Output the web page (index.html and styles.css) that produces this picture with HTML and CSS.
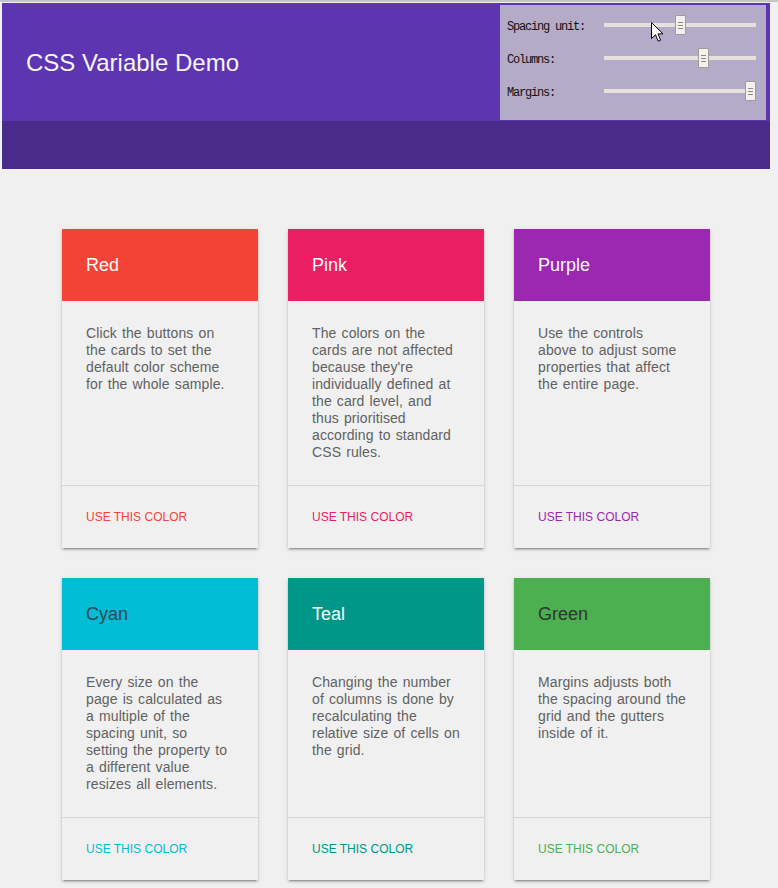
FILE: index.html
```html
<!DOCTYPE html>
<html lang="en">
<head>
<meta charset="utf-8">
<title>CSS Variable Demo</title>
<link rel="stylesheet" href="styles.css">
</head>
<body>
<div class="topline"></div>
<div class="page">
  <header class="header">
    <div class="header-top">
      <h1 class="title">CSS Variable Demo</h1>
      <div class="controls">
        <label class="control"><span class="control-label">Spacing unit:</span><input class="slider" type="range" min="0" max="100" value="50"></label>
        <label class="control"><span class="control-label">Columns:</span><input class="slider" type="range" min="0" max="100" value="67"></label>
        <label class="control"><span class="control-label">Margins:</span><input class="slider" type="range" min="0" max="100" value="100"></label>
        <svg class="cursor" width="13" height="20" viewBox="0 0 13 20"><path d="M0.5 0.5 L0.5 16.5 L4.5 12.8 L7.2 19.2 L9.6 18.2 L7 11.9 L12 11.9 Z" fill="#fff" stroke="#000" stroke-width="1" stroke-linejoin="miter"/></svg>
      </div>
    </div>
    <div class="header-band"></div>
  </header>

  <main class="grid">
    <article class="card card--red">
      <div class="card-head"><h2 class="card-title">Red</h2></div>
      <p class="card-body">Click the buttons on the cards to set the default color scheme for the whole sample.</p>
      <div class="card-foot"><button class="card-btn">USE THIS COLOR</button></div>
    </article>
    <article class="card card--pink">
      <div class="card-head"><h2 class="card-title">Pink</h2></div>
      <p class="card-body">The colors on the cards are not affected because they're individually defined at the card level, and thus prioritised according to standard CSS rules.</p>
      <div class="card-foot"><button class="card-btn">USE THIS COLOR</button></div>
    </article>
    <article class="card card--purple">
      <div class="card-head"><h2 class="card-title">Purple</h2></div>
      <p class="card-body">Use the controls above to adjust some properties that affect the entire page.</p>
      <div class="card-foot"><button class="card-btn">USE THIS COLOR</button></div>
    </article>
    <article class="card card--cyan">
      <div class="card-head"><h2 class="card-title">Cyan</h2></div>
      <p class="card-body">Every size on the page is calculated as a multiple of the spacing unit, so setting the property to a different value resizes all elements.</p>
      <div class="card-foot"><button class="card-btn">USE THIS COLOR</button></div>
    </article>
    <article class="card card--teal">
      <div class="card-head"><h2 class="card-title">Teal</h2></div>
      <p class="card-body">Changing the number of columns is done by recalculating the relative size of cells on the grid.</p>
      <div class="card-foot"><button class="card-btn">USE THIS COLOR</button></div>
    </article>
    <article class="card card--green">
      <div class="card-head"><h2 class="card-title">Green</h2></div>
      <p class="card-body">Margins adjusts both the spacing around the grid and the gutters inside of it.</p>
      <div class="card-foot"><button class="card-btn">USE THIS COLOR</button></div>
    </article>
  </main>
</div>
</body>
</html>
```

FILE: styles.css
```css
* { box-sizing: border-box; }

html, body {
  margin: 0;
  background: #f0f0f0;
  font-family: "Liberation Sans", Arial, sans-serif;
}

.topline {
  height: 2px;
  background: #c6c6c6;
}

.page {
  width: 768px;
  margin: 1px 0 0 2px;
}

/* Header */
.header-top {
  height: 118px;
  background: #5e35b1;
  display: flex;
  justify-content: space-between;
  align-items: center;
}

.title {
  margin: 2px 0 0;
  padding-left: 24px;
  font-size: 24px;
  font-weight: normal;
  color: #f7f5fb;
}

.header-band {
  height: 48px;
  background: #4a2a8a;
}

.controls {
  position: relative;
  align-self: flex-start;
  margin: 2px 4px 0 0;
  width: 266px;
  height: 115px;
  background: #b3abc7;
  padding: 10px 10px 0 7px;
  display: flex;
  flex-direction: column;
  gap: 13px;
}

.control {
  display: flex;
  align-items: center;
  height: 20px;
}

.control-label {
  width: 97px;
  padding-top: 3px;
  font-family: "Liberation Mono", "Courier New", monospace;
  font-size: 12px;
  letter-spacing: -1.2px;
  color: #111;
}

.slider {
  -webkit-appearance: none;
  appearance: none;
  width: 152px;
  height: 20px;
  margin: 0;
  padding: 0;
  background: transparent;
}

.slider::-webkit-slider-runnable-track {
  height: 4px;
  background: #e7e1dc;
  border: none;
}

.slider::-webkit-slider-thumb {
  -webkit-appearance: none;
  appearance: none;
  width: 11px;
  height: 20px;
  margin-top: -8px;
  border: 1px solid #a09b96;
  border-radius: 1px;
  background:
    linear-gradient(#8c8884, #8c8884) 50% 6px / 5px 1px no-repeat,
    linear-gradient(#8c8884, #8c8884) 50% 9px / 5px 1px no-repeat,
    linear-gradient(#8c8884, #8c8884) 50% 12px / 5px 1px no-repeat,
    #f3f1ed;
}

.cursor {
  position: absolute;
  left: 151px;
  top: 17px;
}

/* Grid */
.grid {
  display: grid;
  grid-template-columns: repeat(3, 196px);
  gap: 30px;
  padding: 60px;
}

.card {
  display: flex;
  flex-direction: column;
  background: #f0f0f0;
  box-shadow: 0 2px 2px 0 rgba(0, 0, 0, 0.16), 0 3px 1px -2px rgba(0, 0, 0, 0.2), 0 1px 5px 0 rgba(0, 0, 0, 0.1);
}

.card-head {
  background: var(--c);
  padding: 24px;
}

.card-title {
  margin: 0;
  font-size: 18px;
  line-height: 24px;
  font-weight: normal;
  color: var(--t, #fafafa);
}

.card-body {
  flex: 1;
  margin: 0;
  padding: 24px;
  font-size: 14px;
  line-height: 17px;
  font-kerning: none;
  letter-spacing: 0.1px;
  word-spacing: 1.115px;
  color: #616161;
}

.card-foot {
  border-top: 1px solid #d6d6d6;
  padding: 24px;
}

.card-btn {
  display: block;
  margin: 0;
  padding: 0;
  border: 0;
  background: none;
  font-family: "Liberation Sans", Arial, sans-serif;
  font-size: 12px;
  line-height: 14px;
  color: var(--c);
}

.card--red { --c: #f44336; }
.card--pink { --c: #e91e63; }
.card--purple { --c: #9c27b0; }
.card--cyan { --c: #00bcd4; --t: #37474f; }
.card--teal { --c: #009688; }
.card--green { --c: #4caf50; --t: #333333; }
```
